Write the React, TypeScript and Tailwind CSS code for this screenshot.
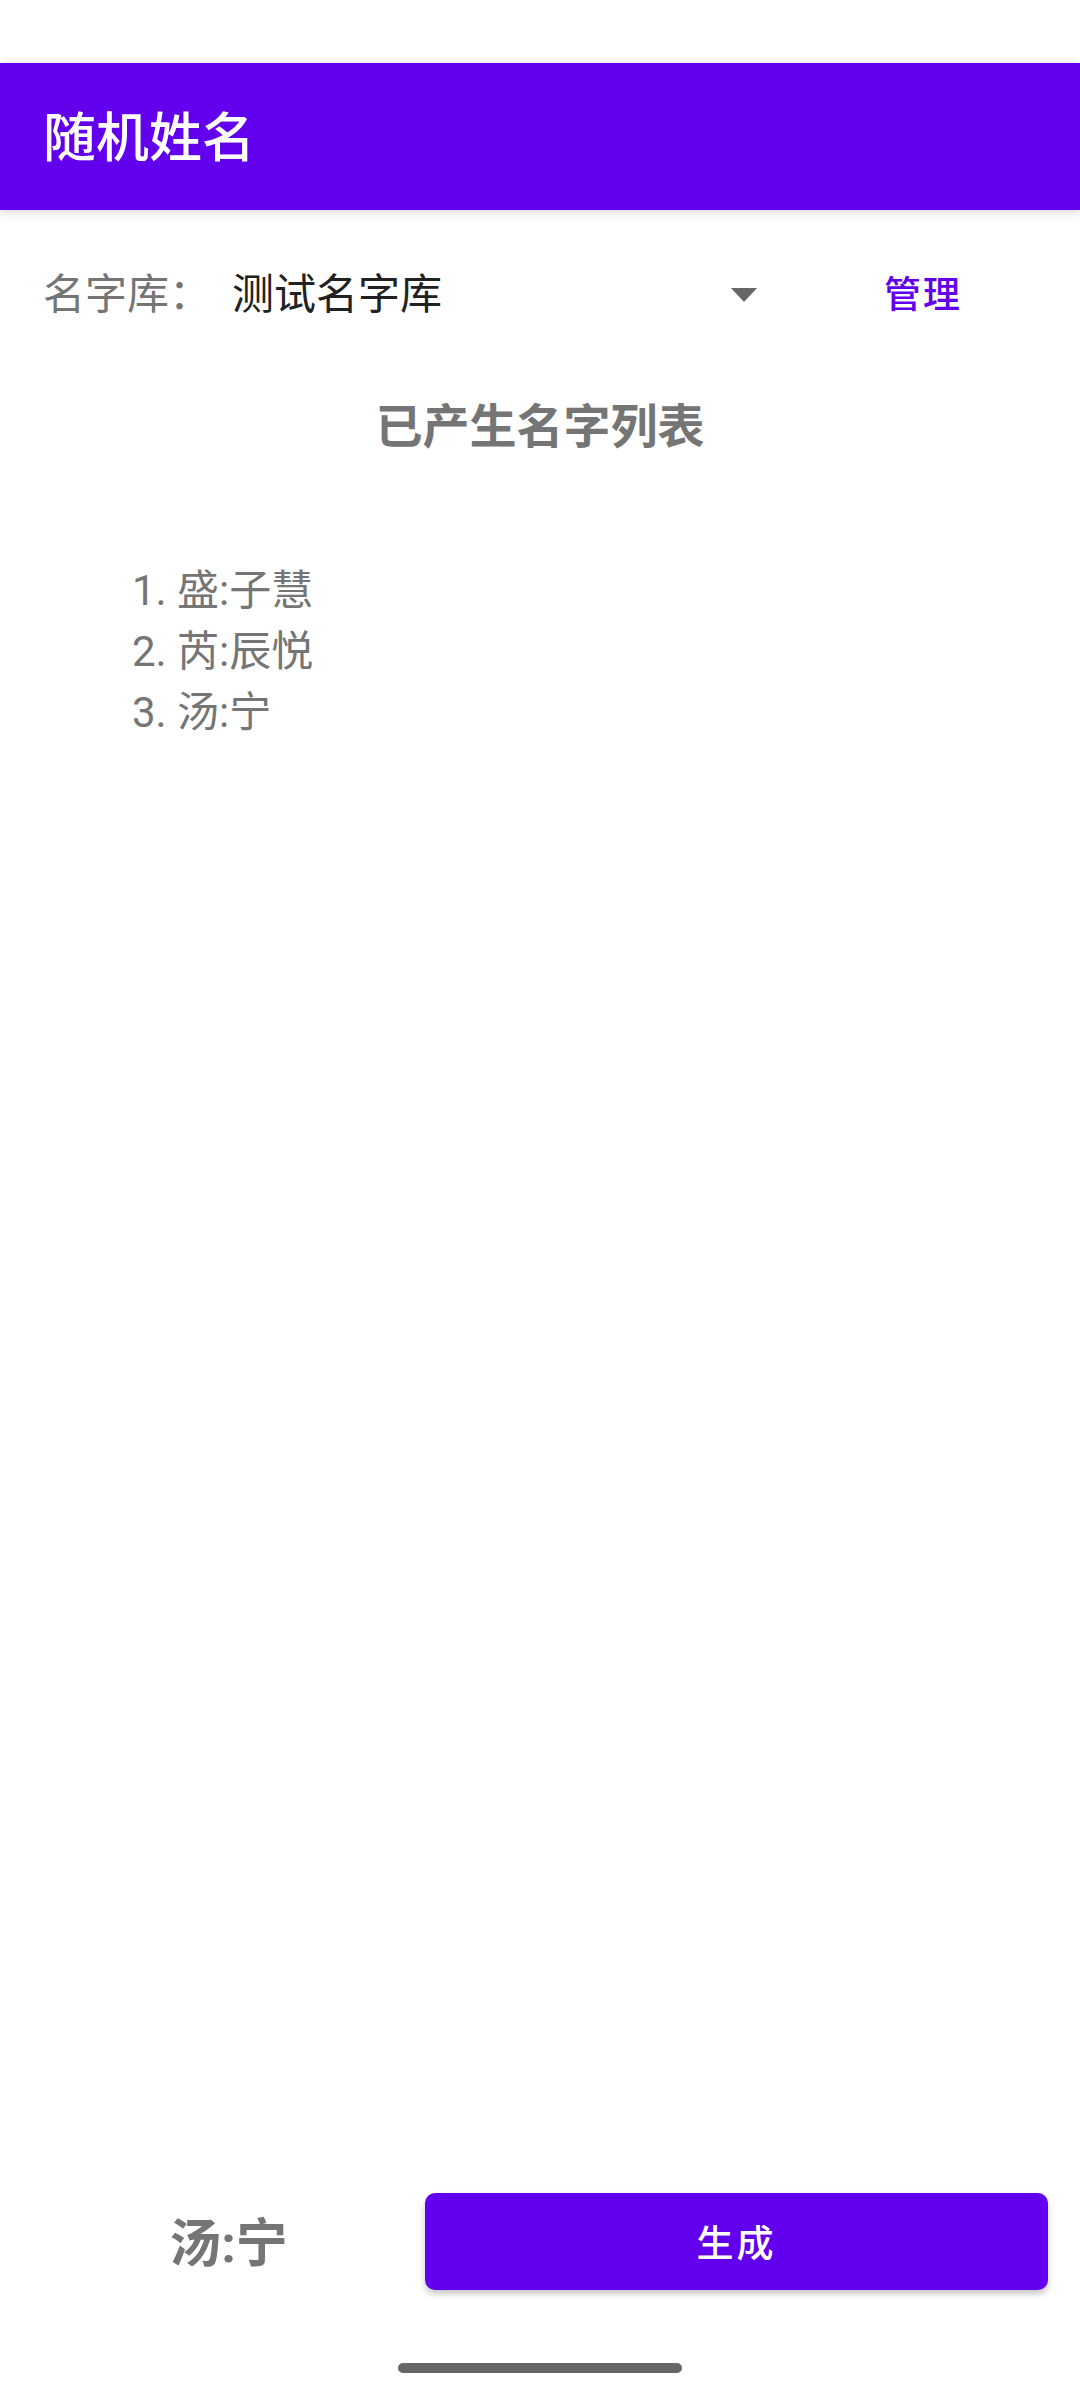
const names = ["盛:子慧", "芮:辰悦", "汤:宁"];

const App = () => {
  return (
    <div className="flex h-[2400px] w-[1080px] flex-col bg-white font-['Roboto','Noto_Sans_CJK_SC',sans-serif]">
      {/* status bar */}
      <div className="h-[63px] shrink-0 bg-white" />

      {/* toolbar */}
      <div className="relative z-10 flex h-[147px] shrink-0 items-center bg-[#6200EE] px-[43px] pt-[6px] shadow-[0_2px_10px_rgba(0,0,0,0.18)]">
        <span className="text-[53px] font-medium leading-none text-white">随机姓名</span>
      </div>

      {/* name library row */}
      <div className="flex h-[170px] shrink-0 items-center pl-[43px]">
        <span className="w-[189px] text-[42px] leading-none text-[#757575]">名字库：</span>
        <div className="flex w-[540px] items-center justify-between pr-[15px]">
          <span className="text-[42px] leading-none text-[#212121]">测试名字库</span>
          <svg width="26" height="14" viewBox="0 0 26 14">
            <path d="M0 0 L26 0 L13 14 Z" fill="#666666" />
          </svg>
        </div>
        <div className="flex w-[302px] justify-center">
          <span className="text-[37px] font-medium leading-none tracking-[2px] text-[#6200EE]">管理</span>
        </div>
      </div>

      {/* list title */}
      <div className="h-[94px] shrink-0 text-center text-[47px] font-bold leading-[94px] text-[#757575]">
        已产生名字列表
      </div>

      {/* generated list */}
      <ol className="mt-[86px] shrink-0 pl-[132px] text-[42px] leading-[61px] text-[#757575]">
        {names.map((name, index) => (
          <li key={name}>
            {index + 1}. {name}
          </li>
        ))}
      </ol>

      <div className="flex-1" />

      {/* bottom bar */}
      <div className="flex h-[97px] shrink-0 items-center px-[32px]">
        <div className="w-[393px] pt-[6px] text-center text-[52px] font-bold leading-none text-[#757575]">汤:宁</div>
        <button className="flex h-[97px] flex-1 items-center justify-center rounded-[10px] bg-[#6200EE] pt-[5px] shadow-[0_4px_6px_rgba(0,0,0,0.22)]">
          <span className="text-[37px] font-medium leading-none tracking-[3px] text-white">生成</span>
        </button>
      </div>

      {/* home indicator */}
      <div className="flex h-[110px] shrink-0 justify-center pt-[73px]">
        <div className="h-[10px] w-[284px] rounded-full bg-[#666666]" />
      </div>
    </div>
  );
};

export default App;
